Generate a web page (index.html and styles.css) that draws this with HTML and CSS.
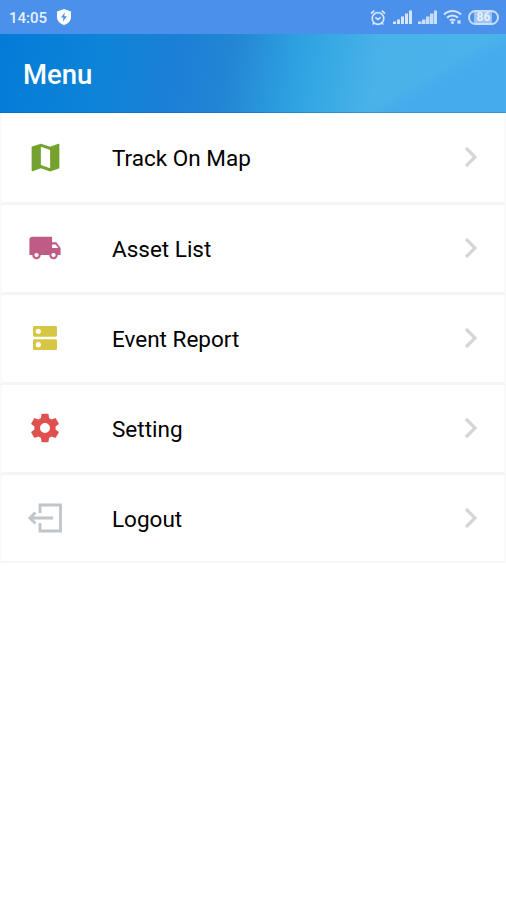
FILE: index.html
```html
<!DOCTYPE html>
<html lang="en">
<head>
    <meta charset="UTF-8">
    <meta name="viewport" content="width=device-width, initial-scale=1.0">
    <title>Menu</title>
    <link rel="stylesheet" href="styles.css">
</head>
<body>

<div class="status-bar">
    <span class="time">14:05</span>
    <svg class="shield" width="16" height="18" viewBox="0 0 16 18">
        <path fill="#fff" d="M8 1l7 2.600v5.600c0 3.600-3 6.400-7 7.800-4-1.400-7-4.200-7-7.800V3.600z"/>
        <path fill="#4b90ea" d="M8.800 4.500L5 9.500h2.500l-.6 4L11 8.200H8.300z"/>
    </svg>
    <div class="status-icons">
        <svg class="alarm" width="16" height="17" viewBox="0 0 16 17" fill="none" stroke="#d5e5fb" stroke-width="1.700">
            <circle cx="8" cy="9.500" r="5.800"/>
            <path d="M1 4.500L4.300 1.700M15 4.500l-3.300-2.800M5.300 8.500L8 10.500l2.700-2.200M4 14l-1.300 1.500M12 14l1.300 1.500"/>
        </svg>
        <svg class="signal" width="20" height="14" viewBox="0 0 20 14" fill="#d5e5fb">
            <path d="M0 11.500h3V14H0zM4 9.500h3V14H4zM8 6.500h3V14H8zM12 3.500h3V14h-3zM16 .5h3V14h-3z"/>
        </svg>
        <svg class="signal" width="20" height="14" viewBox="0 0 20 14" fill="#c9def8">
            <path d="M0 11.500h3.500V14H0zM4 9.500h3.500V14H4zM8 6.500h3.500V14H8zM12 3.500h3.500V14H12zM16 .5h3V14h-3z"/>
        </svg>
        <svg class="wifi" width="20" height="16" viewBox="0 0 20 16" fill="none" stroke="#d5e5fb" stroke-width="2">
            <path d="M1 5.500c4.700-4.700 12.300-4.700 17 0M4 8.700c3-3.100 8-3.100 11 0M6.800 11.600c1.500-1.600 3.900-1.600 5.400 0"/>
            <circle cx="9.500" cy="13.500" r="1.500" fill="#d5e5fb" stroke="none"/>
            <path d="M14.500 11.500l3 3m0-3l-3 3" stroke-width="1.600"/>
        </svg>
        <span class="battery">86</span>
    </div>
</div>

<header class="header">
    <h1>Menu</h1>
</header>

<nav class="menu">
    <a class="menu-item">
        <span class="icon">
            <svg width="37" height="37" viewBox="0 0 24 24">
                <path fill="#75a22f" d="M20.500 3l-.16.030L15 5.100 9 3 3.360 4.900c-.21.070-.36.250-.36.480V20.500c0 .28.220.5.500.5l.16-.030L9 18.900l6 2.100 5.640-1.900c.21-.070.360-.25.360-.48V3.500c0-.28-.22-.5-.5-.5zM15 19l-6-2.110V5l6 2.110V19z"/>
            </svg>
        </span>
        <span class="label">Track On Map</span>
        <svg class="chevron" width="14" height="22" viewBox="0 0 14 22"><path d="M2 2l9 9-9 9"/></svg>
    </a>
    <a class="menu-item">
        <span class="icon">
            <svg width="34" height="34" viewBox="0 0 24 24">
                <path fill="#be5c86" d="M20 8h-3V4H3c-1.100 0-2 .9-2 2v11h2c0 1.660 1.340 3 3 3s3-1.340 3-3h6c0 1.660 1.340 3 3 3s3-1.340 3-3h2v-5l-3-4zM6 18.500c-.83 0-1.500-.67-1.500-1.500s.67-1.500 1.500-1.500 1.500.67 1.500 1.500-.67 1.500-1.500 1.500zm13.500-9l1.960 2.500H17V9.500h2.500zm-1.500 9c-.83 0-1.500-.67-1.500-1.500s.67-1.500 1.500-1.500 1.500.67 1.500 1.500-.67 1.500-1.500 1.500z"/>
            </svg>
        </span>
        <span class="label">Asset List</span>
        <svg class="chevron" width="14" height="22" viewBox="0 0 14 22"><path d="M2 2l9 9-9 9"/></svg>
    </a>
    <a class="menu-item">
        <span class="icon">
            <svg width="32" height="32" viewBox="0 0 24 24">
                <path fill="#d7c644" d="M20 13H4c-.55 0-1 .45-1 1v6c0 .55.450 1 1 1h16c.55 0 1-.45 1-1v-6c0-.55-.45-1-1-1zM7 19c-1.100 0-2-.9-2-2s.9-2 2-2 2 .9 2 2-.9 2-2 2zM20 3H4c-.55 0-1 .45-1 1v6c0 .55.450 1 1 1h16c.55 0 1-.45 1-1V4c0-.55-.45-1-1-1zM7 9c-1.100 0-2-.9-2-2s.9-2 2-2 2 .9 2 2-.9 2-2 2z"/>
            </svg>
        </span>
        <span class="label">Event Report</span>
        <svg class="chevron" width="14" height="22" viewBox="0 0 14 22"><path d="M2 2l9 9-9 9"/></svg>
    </a>
    <a class="menu-item">
        <span class="icon">
            <svg width="34" height="34" viewBox="0 0 24 24">
                <path fill="#df504e" d="M19.430 12.980c.04-.32.070-.64.070-.98s-.03-.66-.07-.98l2.110-1.650c.19-.15.240-.42.120-.64l-2-3.460c-.12-.22-.39-.3-.61-.22l-2.490 1c-.52-.4-1.080-.73-1.690-.98l-.38-2.650C14.460 2.180 14.250 2 14 2h-4c-.25 0-.46.180-.49.420l-.38 2.650c-.61.250-1.170.590-1.690.98l-2.490-1c-.23-.09-.49 0-.61.220l-2 3.460c-.13.220-.07.490.120.640l2.110 1.650c-.04.320-.07.650-.07.980s.03.660.07.980l-2.110 1.650c-.19.150-.24.420-.12.640l2 3.460c.12.220.39.300.61.220l2.490-1c.52.400 1.080.730 1.690.98l.38 2.650c.03.240.24.420.49.420h4c.25 0 .46-.18.490-.42l.38-2.650c.61-.25 1.170-.59 1.690-.98l2.490 1c.23.090.49 0 .61-.22l2-3.460c.12-.22.070-.49-.12-.64l-2.110-1.650zM12 15.500c-1.930 0-3.500-1.570-3.500-3.500s1.570-3.500 3.500-3.500 3.500 1.570 3.500 3.500-1.570 3.500-3.500 3.500z"/>
            </svg>
        </span>
        <span class="label">Setting</span>
        <svg class="chevron" width="14" height="22" viewBox="0 0 14 22"><path d="M2 2l9 9-9 9"/></svg>
    </a>
    <a class="menu-item">
        <span class="icon">
            <svg width="36" height="32" viewBox="0 0 36 32" fill="none" stroke="#bfc5cb" stroke-width="2.800">
                <path d="M13 11V3h20.500v26H13v-8"/>
                <path d="M26 16H3M8.500 10.500L2.800 16l5.700 5.500"/>
            </svg>
        </span>
        <span class="label">Logout</span>
        <svg class="chevron" width="14" height="22" viewBox="0 0 14 22"><path d="M2 2l9 9-9 9"/></svg>
    </a>
</nav>

</body>
</html>
```
FILE: styles.css
```css
* {
    box-sizing: border-box;
}
body {
    margin: 0;
    background-color: #fff;
    color: #000;
    font-family: Roboto, sans-serif;
}
.status-bar {
    display: flex;
    align-items: center;
    height: 34px;
    padding: 0 7px 0 9px;
    background-color: #4b90ea;
    color: #e8f1fd;
}
.time {
    font-size: 15px;
    font-weight: 500;
    line-height: 18px;
    margin-top: 2px;
}
.shield {
    margin-left: 9px;
}
.status-icons {
    display: flex;
    align-items: center;
    margin-left: auto;
}
.alarm {
    margin-right: 7px;
}
.signal {
    margin-right: 5px;
}
.wifi {
    margin-right: 5px;
}
.battery {
    width: 31px;
    height: 15px;
    border: 2px solid #c9def8;
    border-radius: 8px;
    background: linear-gradient(90deg, #4b90ea 4px, #9fc3f4 4px, #9fc3f4 22px, #4b90ea 22px);
    font-size: 12px;
    font-weight: 700;
    line-height: 11px;
    text-align: center;
}
.header {
    display: flex;
    align-items: center;
    height: 79px;
    padding: 4px 0 0 23px;
    border-bottom: 1px solid rgba(0, 90, 180, 0.3);
    background:
        linear-gradient(150deg, transparent 50%, rgba(66, 165, 238, 0.5) 60%) right / 150px 100% no-repeat,
        linear-gradient(100deg, #047bd8 0%, #0d84d8 20%, #1b7fd6 34%, #2385d4 45%, #30a5e2 60%, #4ab2e9 74%, #4bb2ec 100%);
}
.header h1 {
    margin: 0;
    color: #fff;
    font-size: 27.5px;
    font-weight: 500;
    line-height: 32px;
}
.menu-item {
    display: flex;
    align-items: center;
    height: 90px;
    padding-right: 26px;
    border: 2px solid #fafafa;
    border-top-width: 0;
    border-bottom: 3px solid #f5f5f5;
}
.menu-item:first-child {
    height: 92px;
}
.menu-item:last-child {
    height: 88px;
    border-bottom-width: 2px;
}
.icon {
    display: flex;
    justify-content: center;
    width: 86px;
    margin-top: -1px;
}
.label {
    flex: 1;
    padding-left: 24px;
    font-size: 22.5px;
    line-height: 28px;
    margin-top: 1px;
}
.chevron {
    fill: none;
    stroke: #d6d6d6;
    stroke-width: 3.200;
    margin-top: -1px;
}
```
